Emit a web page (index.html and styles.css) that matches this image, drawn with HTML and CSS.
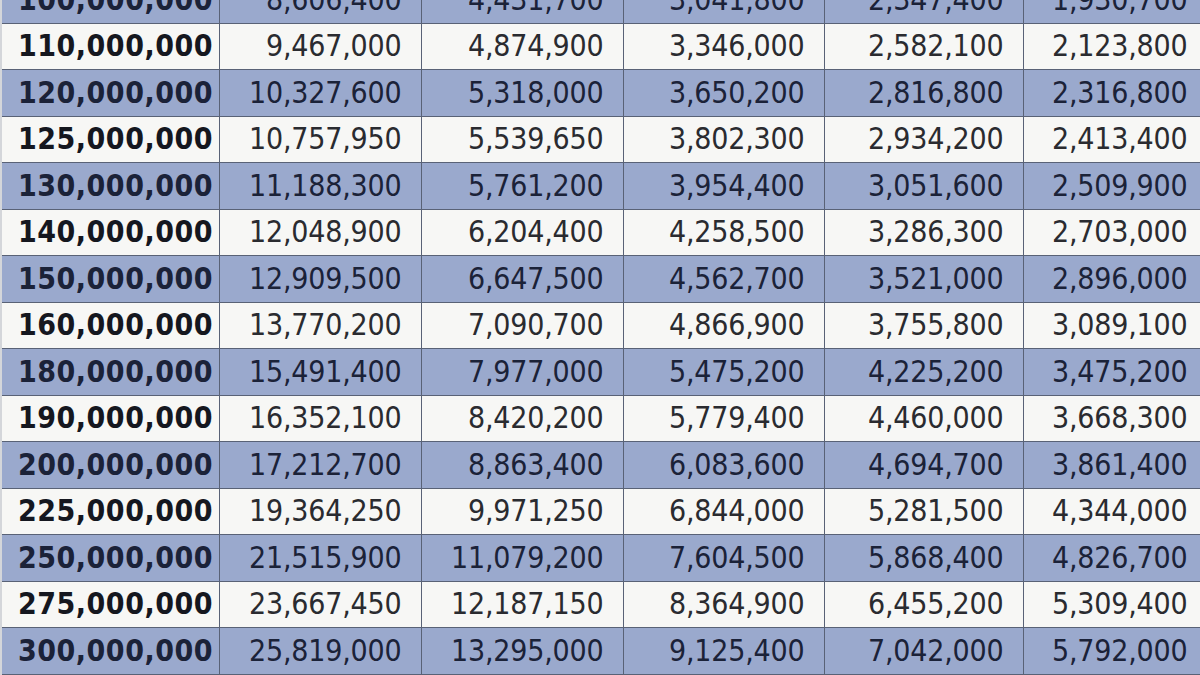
FILE: index.html
```html
<!DOCTYPE html>
<html>
<head>
<meta charset="utf-8">
<link rel="stylesheet" href="styles.css">
</head>
<body>
<div class="viewport">
<table class="grid">
<colgroup>
<col class="c1"><col class="c2"><col class="c3"><col class="c4"><col class="c5"><col class="c6">
</colgroup>
<tbody>
<tr class="blue"><th>100,000,000</th><td>8,606,400</td><td>4,431,700</td><td>3,041,800</td><td>2,347,400</td><td>1,930,700</td></tr>
<tr class="white"><th>110,000,000</th><td>9,467,000</td><td>4,874,900</td><td>3,346,000</td><td>2,582,100</td><td>2,123,800</td></tr>
<tr class="blue"><th>120,000,000</th><td>10,327,600</td><td>5,318,000</td><td>3,650,200</td><td>2,816,800</td><td>2,316,800</td></tr>
<tr class="white"><th>125,000,000</th><td>10,757,950</td><td>5,539,650</td><td>3,802,300</td><td>2,934,200</td><td>2,413,400</td></tr>
<tr class="blue"><th>130,000,000</th><td>11,188,300</td><td>5,761,200</td><td>3,954,400</td><td>3,051,600</td><td>2,509,900</td></tr>
<tr class="white"><th>140,000,000</th><td>12,048,900</td><td>6,204,400</td><td>4,258,500</td><td>3,286,300</td><td>2,703,000</td></tr>
<tr class="blue"><th>150,000,000</th><td>12,909,500</td><td>6,647,500</td><td>4,562,700</td><td>3,521,000</td><td>2,896,000</td></tr>
<tr class="white"><th>160,000,000</th><td>13,770,200</td><td>7,090,700</td><td>4,866,900</td><td>3,755,800</td><td>3,089,100</td></tr>
<tr class="blue"><th>180,000,000</th><td>15,491,400</td><td>7,977,000</td><td>5,475,200</td><td>4,225,200</td><td>3,475,200</td></tr>
<tr class="white"><th>190,000,000</th><td>16,352,100</td><td>8,420,200</td><td>5,779,400</td><td>4,460,000</td><td>3,668,300</td></tr>
<tr class="blue"><th>200,000,000</th><td>17,212,700</td><td>8,863,400</td><td>6,083,600</td><td>4,694,700</td><td>3,861,400</td></tr>
<tr class="white"><th>225,000,000</th><td>19,364,250</td><td>9,971,250</td><td>6,844,000</td><td>5,281,500</td><td>4,344,000</td></tr>
<tr class="blue"><th>250,000,000</th><td>21,515,900</td><td>11,079,200</td><td>7,604,500</td><td>5,868,400</td><td>4,826,700</td></tr>
<tr class="white"><th>275,000,000</th><td>23,667,450</td><td>12,187,150</td><td>8,364,900</td><td>6,455,200</td><td>5,309,400</td></tr>
<tr class="blue"><th>300,000,000</th><td>25,819,000</td><td>13,295,000</td><td>9,125,400</td><td>7,042,000</td><td>5,792,000</td></tr>
</tbody>
</table>
</div>
</body>
</html>
```
FILE: styles.css
```css
html, body {
  margin: 0;
  padding: 0;
  background: #f4f4f2;
  overflow: hidden;
}
.viewport {
  width: 1200px;
  height: 675px;
  overflow: hidden;
}
.grid {
  border-collapse: collapse;
  table-layout: fixed;
  width: 1206px;
  margin-top: -23px;
  font-family: "DejaVu Sans Condensed", "DejaVu Sans", sans-serif;
  font-stretch: condensed;
  font-size: 30px;
}
.c1 { width: 218px; }
.c2 { width: 202px; }
.c3 { width: 202px; }
.c4 { width: 201px; }
.c5 { width: 199px; }
.c6 { width: 184px; }
.grid th, .grid td {
  height: 45.5px;
  padding: 0;
  border: 1px solid #596276;
  line-height: 1;
  white-space: nowrap;
  vertical-align: middle;
}
.grid th {
  text-align: left;
  padding-left: 16px;
  font-weight: bold;
  letter-spacing: 0.5px;
  color: #15171f;
}
.grid td {
  text-align: right;
  padding-right: 19px;
  font-weight: normal;
  letter-spacing: -0.2px;
  color: #2a2b30;
}
.grid tr:first-child th, .grid tr:first-child td { border-top: none; }
.grid th { border-left: 2px solid #d4d6da; }
.blue th, .blue td {
  background: #9aa9cd;
  color: #1b2238;
}
.white th, .white td {
  background: #f7f7f5;
}
```
